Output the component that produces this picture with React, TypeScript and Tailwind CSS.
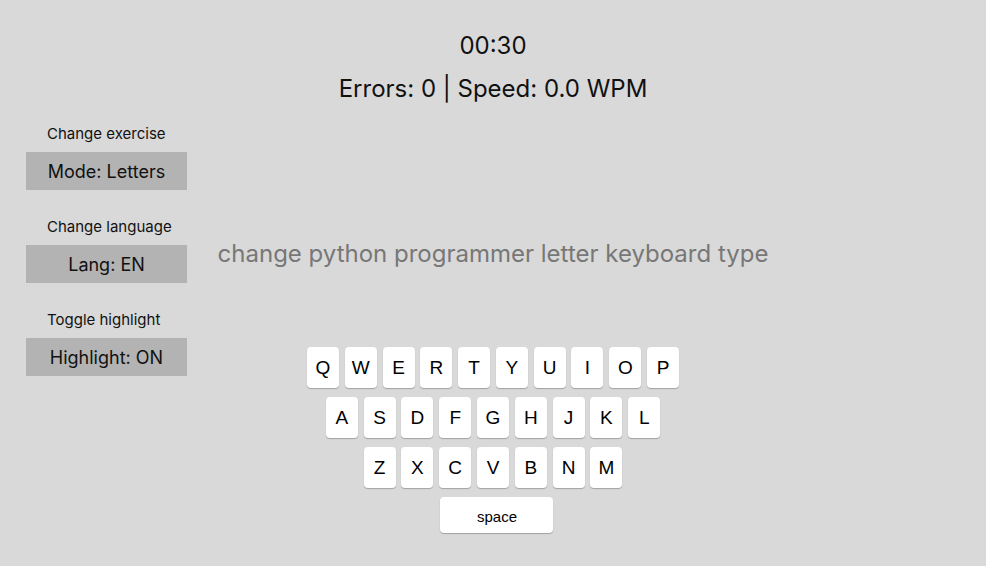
const rows = [
  ["Q", "W", "E", "R", "T", "Y", "U", "I", "O", "P"],
  ["A", "S", "D", "F", "G", "H", "J", "K", "L"],
  ["Z", "X", "C", "V", "B", "N", "M"],
]

const controls = [
  { label: "Change exercise", value: "Mode: Letters" },
  { label: "Change language", value: "Lang: EN" },
  { label: "Toggle highlight", value: "Highlight: ON" },
]

function Key({ k }: { k: string }) {
  return (
    <div className="w-[32px] h-[41px] pt-[2px] flex items-center justify-center bg-white rounded-[4px] shadow-[0_1px_1px_rgba(0,0,0,0.25)] text-[19px] text-black font-['Liberation_Sans',Arial,sans-serif]">
      {k}
    </div>
  )
}

export default function App() {
  return (
    <div className="w-full h-[566px] bg-[#d9d9d9] text-[#111] font-['Inter',sans-serif] overflow-hidden">
      <div className="flex flex-col items-center pt-[32px]">
        <div className="text-[24px] leading-[28px]">00:30</div>
        <div className="text-[24px] leading-[28px] mt-[15px]">Errors: 0 | Speed: 0.0 WPM</div>
      </div>

      <div className="flex mt-[19px]">
        <div className="w-[187px] shrink-0 pl-[26px] pt-[2px] flex flex-col gap-[27px]">
          {controls.map((c) => (
            <div key={c.label} className="flex flex-col">
              <div className="text-[15px] leading-[20px] pl-[21px]">{c.label}</div>
              <button className="mt-[8px] w-[161px] h-[38px] bg-[#b3b3b3] text-[18px] text-[#111]">{c.value}</button>
            </div>
          ))}
        </div>

        <div className="flex-1 flex flex-col items-center">
          <div className="mt-[117px] text-[24px] leading-[30px] text-[#777]">change python programmer letter keyboard type</div>
          <div className="mt-[78px] flex flex-col items-center gap-[9px]">
            {rows.map((r, i) => (
              <div key={i} className="flex gap-[5.8px]">
                {r.map((k) => (
                  <Key key={k} k={k} />
                ))}
              </div>
            ))}
            <div className="w-[113px] h-[36px] pt-[5px] flex items-center justify-center bg-white rounded-[4px] shadow-[0_1px_1px_rgba(0,0,0,0.25)] text-[15px] text-black font-['Liberation_Sans',Arial,sans-serif] translate-x-[4px]">
              space
            </div>
          </div>
        </div>

        <div className="w-[187px] shrink-0" />
      </div>
    </div>
  )
}
